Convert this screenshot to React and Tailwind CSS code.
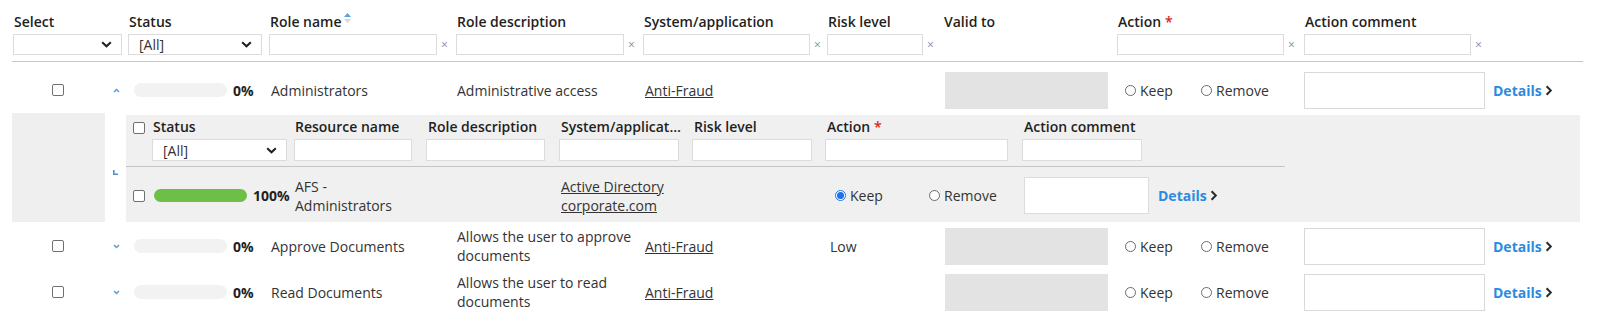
function ChevronDown() {
  return (
    <svg width="11" height="7" viewBox="0 0 11 7" fill="none">
      <path d="M1.2 1.2L5.5 5.3L9.8 1.2" stroke="#1f1f1f" strokeWidth="2" />
    </svg>
  );
}

function SortIcon() {
  return (
    <svg width="7" height="10" viewBox="0 0 7 10" className="ml-[2px] -mt-[8px]">
      <path d="M3.5 0L7 4H0z" fill="#5aa0e0" />
      <path d="M0 6h7L3.5 10z" fill="#cbd9e8" />
    </svg>
  );
}

function Caret({ up }) {
  return (
    <svg width="7" height="5" viewBox="0 0 7 5" fill="none">
      <path d={up ? "M1 4L3.5 1.5L6 4" : "M1 1L3.5 3.5L6 1"} stroke="#5b9bd5" strokeWidth="1.5" />
    </svg>
  );
}

function DetailsLink() {
  return (
    <div className="flex items-center font-bold text-[#2b8be0]">
      Details
      <svg width="8" height="11" viewBox="0 0 8 11" fill="none" className="ml-[3px]">
        <path d="M1.6 1.2L5.8 5.5L1.6 9.8" stroke="#2a2a2a" strokeWidth="2" />
      </svg>
    </div>
  );
}

function Checkbox() {
  return <div className="w-[12px] h-[12px] rounded-[2px] border border-[#707070] bg-white shrink-0" />;
}

function Radio({ checked, label }) {
  return (
    <div className="flex items-center">
      {checked ? (
        <div className="w-[11px] h-[11px] rounded-full border border-[#1a73e8] bg-white flex items-center justify-center">
          <div className="w-[7px] h-[7px] rounded-full bg-[#1a73e8]" />
        </div>
      ) : (
        <div className="w-[11px] h-[11px] rounded-full border border-[#6b6b6b] bg-white" />
      )}
      <span className="ml-[4px]">{label}</span>
    </div>
  );
}

function FakeSelect({ value, className }) {
  return (
    <div className={"flex items-center justify-between border border-[#dcdcdc] bg-white pl-[10px] pr-[9px] " + className}>
      <span>{value}</span>
      <ChevronDown />
    </div>
  );
}

function Filter({ w }) {
  return (
    <div className="flex items-center">
      <div className={"h-[21px] border border-[#dcdcdc] bg-white " + w} />
      <span className="ml-[4px] text-[12px] leading-none text-[#7f8ea3]">×</span>
    </div>
  );
}

const headCell = "flex flex-col";
const label = "h-[18px] leading-[18px] font-semibold text-[#1f1f1f] flex items-center whitespace-nowrap";

function MainRow({ up, name, desc, risk, className }) {
  return (
    <div className={"grid grid-cols-[116px_141px_187px_187px_184px_116px_174px_187px_189px_90px] h-[46px] items-center " + (className || "")}>
      <div className="flex items-center">
        <div className="ml-[40px]"><Checkbox /></div>
        <div className="ml-[49px] flex items-center"><Caret up={up} /></div>
      </div>
      <div className="flex items-center">
        <div className="ml-[6px] w-[93px] h-[14px] rounded-full bg-[#f2f2f2]" />
        <span className="ml-[6px] font-bold text-[#1f1f1f]">0%</span>
      </div>
      <div className="pl-[2px]">{name}</div>
      <div className="pl-[1px] w-[182px] leading-[19px]">{desc}</div>
      <div className="pl-[2px]"><span className="underline">Anti-Fraud</span></div>
      <div className="pl-[3px]">{risk}</div>
      <div className="pl-[2px]"><div className="w-[163px] h-[37px] bg-[#e3e3e3]" /></div>
      <div className="flex items-center pl-[8px]">
        <div className="w-[76px]"><Radio label="Keep" /></div>
        <Radio label="Remove" />
      </div>
      <div><div className="w-[181px] h-[37px] border border-[#d9d9d9] bg-white" /></div>
      <DetailsLink />
    </div>
  );
}

function SubPanel() {
  const cols = "grid grid-cols-[26px_142px_132px_133px_133px_133px_197px_136px_127px]";
  return (
    <div className="flex">
      <div className="w-[93px] h-[109px] bg-[#efefef]" />
      <div className="w-[21px] flex items-center pl-[8px] pt-[10px]">
        <svg width="5" height="5" viewBox="0 0 5 5" fill="none">
          <path d="M0.8 0V4.2H5" stroke="#4a90d9" strokeWidth="1.6" />
        </svg>
      </div>
      <div className="mt-[2px] w-[1454px] h-[107px] bg-[#f0f0f0]">
        <div className={cols + " w-[1159px] pt-[3px] pb-[5px] border-b border-[#c4c4c4]"}>
          <div className="flex items-start pl-[7px] pt-[4px]"><Checkbox /></div>
          <div className={headCell}>
            <div className={label + " pl-[1px]"}>Status</div>
            <FakeSelect value="[All]" className="mt-[3px] h-[22px] w-[135px]" />
          </div>
          <div className={headCell}>
            <div className={label + " pl-[1px]"}>Resource name</div>
            <div className="mt-[3px] h-[22px] w-[118px] border border-[#dcdcdc] bg-white" />
          </div>
          <div className={headCell}>
            <div className={label + " pl-[2px]"}>Role description</div>
            <div className="mt-[3px] h-[22px] w-[119px] border border-[#dcdcdc] bg-white" />
          </div>
          <div className={headCell}>
            <div className={label + " pl-[2px] w-[124px]"}><span className="truncate">System/application</span></div>
            <div className="mt-[3px] h-[22px] w-[120px] border border-[#dcdcdc] bg-white" />
          </div>
          <div className={headCell}>
            <div className={label + " pl-[2px]"}>Risk level</div>
            <div className="mt-[3px] h-[22px] w-[120px] border border-[#dcdcdc] bg-white" />
          </div>
          <div className={headCell}>
            <div className={label + " pl-[2px]"}>Action<span className="ml-[4px] text-[#e42020]">*</span></div>
            <div className="mt-[3px] h-[22px] w-[183px] border border-[#dcdcdc] bg-white" />
          </div>
          <div className={headCell}>
            <div className={label + " pl-[2px]"}>Action comment</div>
            <div className="mt-[3px] h-[22px] w-[120px] border border-[#dcdcdc] bg-white" />
          </div>
          <div />
        </div>
        <div className={cols + " w-[1159px] h-[55px] items-center"}>
          <div className="pl-[7px] pt-[2px]"><Checkbox /></div>
          <div className="flex items-center pt-[2px]">
            <div className="ml-[2px] w-[93px] h-[13px] rounded-full bg-[#6dbf45]" />
            <span className="ml-[6px] font-bold text-[#1f1f1f]">100%</span>
          </div>
          <div className="pl-[1px] w-[120px] leading-[19px] pt-[2px]">AFS - Administrators</div>
          <div />
          <div className="pl-[2px] w-[125px] leading-[19px] underline pt-[2px]">Active Directory corporate.com</div>
          <div />
          <div className="flex items-center pl-[10px] pt-[2px]">
            <div className="w-[94px]"><Radio checked label="Keep" /></div>
            <Radio label="Remove" />
          </div>
          <div className="pl-[2px] pt-[2px]"><div className="w-[125px] h-[37px] border border-[#dcdcdc] bg-white" /></div>
          <div className="pt-[2px]"><DetailsLink /></div>
        </div>
      </div>
    </div>
  );
}

export default function App() {
  return (
    <div className="w-[1617px] h-[319px] bg-white font-['Open_Sans',sans-serif] text-[14px] text-[#333333] overflow-hidden">
      <div className="ml-[12px] w-[1571px]">
        <div className="grid grid-cols-[116px_141px_187px_187px_184px_116px_174px_187px_189px_90px] pt-[13px] pb-[6px] border-b border-[#c6c6c6]">
          <div className={headCell}>
            <div className={label + " pl-[2px]"}>Select</div>
            <FakeSelect value="" className="mt-[3px] h-[21px] w-[109px] ml-[1px]" />
          </div>
          <div className={headCell}>
            <div className={label + " pl-[1px]"}>Status</div>
            <FakeSelect value="[All]" className="mt-[3px] h-[21px] w-[134px]" />
          </div>
          <div className={headCell}>
            <div className={label + " pl-[1px]"}>Role name<SortIcon /></div>
            <div className="mt-[3px]"><Filter w="w-[168px]" /></div>
          </div>
          <div className={headCell}>
            <div className={label + " pl-[1px]"}>Role description</div>
            <div className="mt-[3px]"><Filter w="w-[168px]" /></div>
          </div>
          <div className={headCell}>
            <div className={label + " pl-[1px]"}>System/application</div>
            <div className="mt-[3px]"><Filter w="w-[167px]" /></div>
          </div>
          <div className={headCell}>
            <div className={label + " pl-[1px]"}>Risk level</div>
            <div className="mt-[3px]"><Filter w="w-[96px]" /></div>
          </div>
          <div className={headCell}>
            <div className={label + " pl-[1px]"}>Valid to</div>
            <div className="mt-[3px] h-[21px]" />
          </div>
          <div className={headCell}>
            <div className={label + " pl-[1px]"}>Action<span className="ml-[4px] text-[#e42020]">*</span></div>
            <div className="mt-[3px]"><Filter w="w-[167px]" /></div>
          </div>
          <div className={headCell}>
            <div className={label + " pl-[1px]"}>Action comment</div>
            <div className="mt-[3px]"><Filter w="w-[167px]" /></div>
          </div>
          <div />
        </div>
        <MainRow up name="Administrators" desc="Administrative access" risk="" className="mt-[5px]" />
        <SubPanel />
        <MainRow name="Approve Documents" desc="Allows the user to approve documents" risk="Low" className="mt-[1px]" />
        <MainRow name="Read Documents" desc="Allows the user to read documents" risk="" />
      </div>
    </div>
  );
}
